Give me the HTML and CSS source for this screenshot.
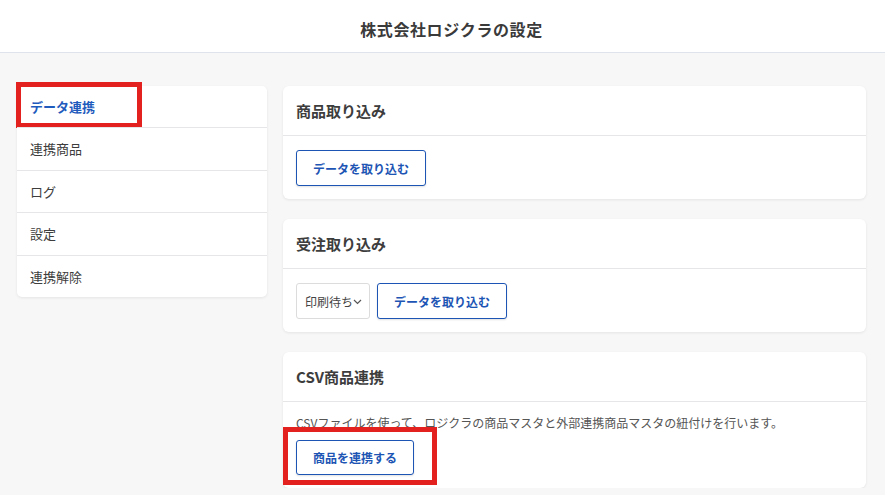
FILE: index.html
```html
<!DOCTYPE html>
<html lang="ja">
<head>
<meta charset="utf-8">
<title>株式会社ロジクラの設定</title>
<link rel="stylesheet" href="styles.css">
</head>
<body>
  <header class="topbar">
    <h1 class="topbar-title">株式会社ロジクラの設定</h1>
  </header>

  <div class="layout">
    <nav class="side-menu">
      <a class="side-item is-active" href="#">データ連携<span class="mark mark-nav"></span></a>
      <a class="side-item" href="#">連携商品</a>
      <a class="side-item" href="#">ログ</a>
      <a class="side-item" href="#">設定</a>
      <a class="side-item" href="#">連携解除</a>
    </nav>

    <main class="panels">
      <section class="panel">
        <h2 class="panel-head">商品取り込み</h2>
        <div class="panel-body">
          <button class="btn" type="button">データを取り込む</button>
        </div>
      </section>

      <section class="panel">
        <h2 class="panel-head">受注取り込み</h2>
        <div class="panel-body row">
          <div class="select">
            <span>印刷待ち</span>
            <svg class="chev" width="9" height="6" viewBox="0 0 9 6"><path d="M1 1l3.5 3.5L8 1" fill="none" stroke="#555" stroke-width="1.2"/></svg>
          </div>
          <button class="btn" type="button">データを取り込む</button>
        </div>
      </section>

      <section class="panel">
        <h2 class="panel-head">CSV商品連携</h2>
        <div class="panel-body">
          <p class="desc">CSVファイルを使って、ロジクラの商品マスタと外部連携商品マスタの紐付けを行います。</p>
          <div class="btn-wrap">
            <button class="btn btn-narrow" type="button">商品を連携する</button>
            <span class="mark mark-btn"></span>
          </div>
        </div>
      </section>
    </main>
  </div>
</body>
</html>
```

FILE: styles.css
```css
* {
  box-sizing: border-box;
}

html, body {
  margin: 0;
  padding: 0;
}

body {
  background: #f7f7f7;
  font-family: "Noto Sans CJK JP", "Noto Sans", sans-serif;
  color: #3d3d3d;
}

/* top bar */
.topbar {
  height: 53px;
  background: #fff;
  border-bottom: 1px solid #dfe4ec;
  display: flex;
  align-items: center;
  justify-content: center;
  padding-left: 18px;
}

.topbar-title {
  margin: 0;
  font-size: 16px;
  line-height: 20px;
  font-weight: 700;
  color: #3a3a3a;
  letter-spacing: 0.6px;
  padding-top: 5px;
}

/* two columns */
.layout {
  display: flex;
  align-items: flex-start;
  gap: 16px;
  padding: 33px 19px 0 17px;
}

/* side navigation */
.side-menu {
  width: 250px;
  flex: none;
  background: #fff;
  border-radius: 5px;
  box-shadow: 0 1px 3px rgba(0, 0, 0, 0.08);
  display: flex;
  flex-direction: column;
}

.side-item {
  position: relative;
  display: flex;
  align-items: center;
  height: 42.5px;
  padding: 0 13px;
  font-size: 13px;
  color: #3d3d3d;
  text-decoration: none;
  border-top: 1px solid #e6e6e8;
}

.side-item:first-child {
  border-top: none;
  height: 41px;
}

.side-item.is-active {
  color: #1f5bbd;
  font-weight: 700;
}

/* red annotation frames */
.mark {
  position: absolute;
  border: 5px solid #e3211f;
  pointer-events: none;
}

.mark-nav {
  left: -1px;
  top: -4px;
  width: 126px;
  height: 46px;
}

.btn-wrap {
  position: relative;
  display: inline-block;
}

.mark-btn {
  left: -13px;
  top: -13px;
  width: 154px;
  height: 58px;
}

/* content panels */
.panels {
  flex: 1;
  display: flex;
  flex-direction: column;
  gap: 20px;
}

.panel {
  background: #fff;
  border-radius: 6px;
  box-shadow: 0 1px 3px rgba(0, 0, 0, 0.08);
}

.panel-head {
  margin: 0;
  height: 50px;
  display: flex;
  align-items: center;
  padding: 0 13px;
  font-size: 15px;
  font-weight: 700;
  color: #3d3d3d;
  border-bottom: 1px solid #e6e6e8;
}

.panel-body {
  padding: 14px 13px 13px;
}

.row {
  display: flex;
  gap: 7px;
}

.desc {
  margin: 0 0 10px;
  font-size: 12px;
  line-height: 14px;
  color: #555;
}

/* buttons and select */
.btn {
  height: 36px;
  padding: 0 16px;
  background: #fff;
  border: 1px solid #1d55b4;
  border-radius: 3px;
  color: #1d55b4;
  font-family: inherit;
  font-size: 12px;
  font-weight: 700;
  box-shadow: 0 1px 2px rgba(0, 0, 0, 0.12);
  cursor: pointer;
}

.btn-narrow {
  height: 35px;
  padding: 0 16px;
}

.select {
  height: 36px;
  width: 74px;
  flex: none;
  display: flex;
  align-items: center;
  padding: 0 4px 0 8px;
  border: 1px solid #dcdcdc;
  border-radius: 3px;
  font-size: 12px;
  color: #444;
  white-space: nowrap;
}

.chev {
  flex: none;
  margin-top: 1px;
}
```
